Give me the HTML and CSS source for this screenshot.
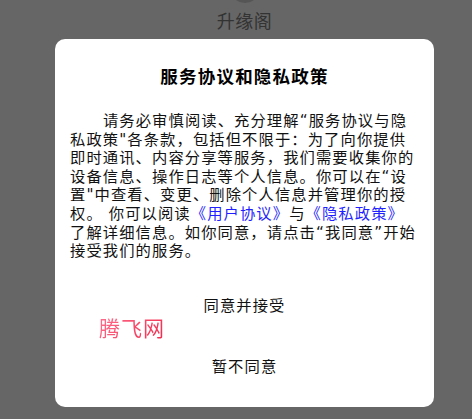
FILE: index.html
```html
<!DOCTYPE html>
<html>
    <head>
        <meta charset="utf-8">
        <link rel="stylesheet" href="styles.css">
    </head>
    <body>
        <div class="screen">
            <div class="header">
                <div class="avatar"></div>
                <div class="app-name">升缘阁</div>
            </div>

            <!-- Privacy agreement dialog -->
            <div class="dialog">
                <h1>服务协议和隐私政策</h1>
                <p class="terms">请务必审慎阅读、充分理解“服务协议与隐私政策"各条款，包括但不限于：为了向你提供即时通讯、内容分享等服务，我们需要收集你的设备信息、操作日志等个人信息。你可以在“设置"中查看、变更、删除个人信息并管理你的授权。 你可以阅读<a class="link" href="#">《用户协议》</a>与<a class="link" href="#">《隐私政策》</a>了解详细信息。如你同意，请点击“我同意”开始接受我们的服务。</p>
                <div class="actions">
                    <button class="action">同意并接受</button>
                    <button class="action">暂不同意</button>
                </div>
                <div class="watermark">腾飞网</div>
            </div>
        </div>
    </body>
</html>
```

FILE: styles.css
```css
body {
    margin: 0;
    padding: 0;
    background-color: #666666;
    font-family: "DejaVu Sans", "Noto Sans CJK SC", sans-serif;
    color: #111;
    overflow: hidden;
}
.screen {
    width: 489px;
}
.header {
    display: flow-root;
    height: 39px;
    text-align: center;
}
.avatar {
    width: 30px;
    height: 30px;
    margin: -27px auto 0;
    border-radius: 50%;
    background-color: #555;
}
.app-name {
    font-size: 18px;
    line-height: 24px;
    margin-top: 7px;
    color: #333;
    letter-spacing: 0.5px;
}
.dialog {
    position: relative;
    width: 379px;
    height: 368px;
    margin: 0 auto;
    background-color: #fff;
    border-radius: 10px;
    box-sizing: border-box;
    padding: 26px 0 0;
}
h1 {
    margin: 0;
    font-size: 17.5px;
    line-height: 24px;
    font-weight: bold;
    letter-spacing: 1.2px;
    text-align: center;
    color: #000;
}
.terms {
    margin: 23px 0 0;
    padding: 0 14px 0 15px;
    font-size: 15.3px;
    line-height: 18.6px;
    letter-spacing: 1.1px;
    text-indent: 2.15em;
}
.link {
    color: #1f1fff;
    text-decoration: none;
}
.actions {
    display: flex;
    flex-direction: column;
    gap: 11px;
    margin-top: 18px;
}
.action {
    height: 50px;
    border: none;
    background: none;
    font-family: inherit;
    font-size: 15.3px;
    letter-spacing: 1.1px;
    color: #111;
    cursor: pointer;
}
.watermark {
    position: absolute;
    left: 44px;
    top: 278px;
    font-size: 21px;
    line-height: 24px;
    letter-spacing: 1px;
    background: linear-gradient(135deg, #ff6f8e, #f0284a);
    -webkit-background-clip: text;
    background-clip: text;
    color: transparent;
}
```
